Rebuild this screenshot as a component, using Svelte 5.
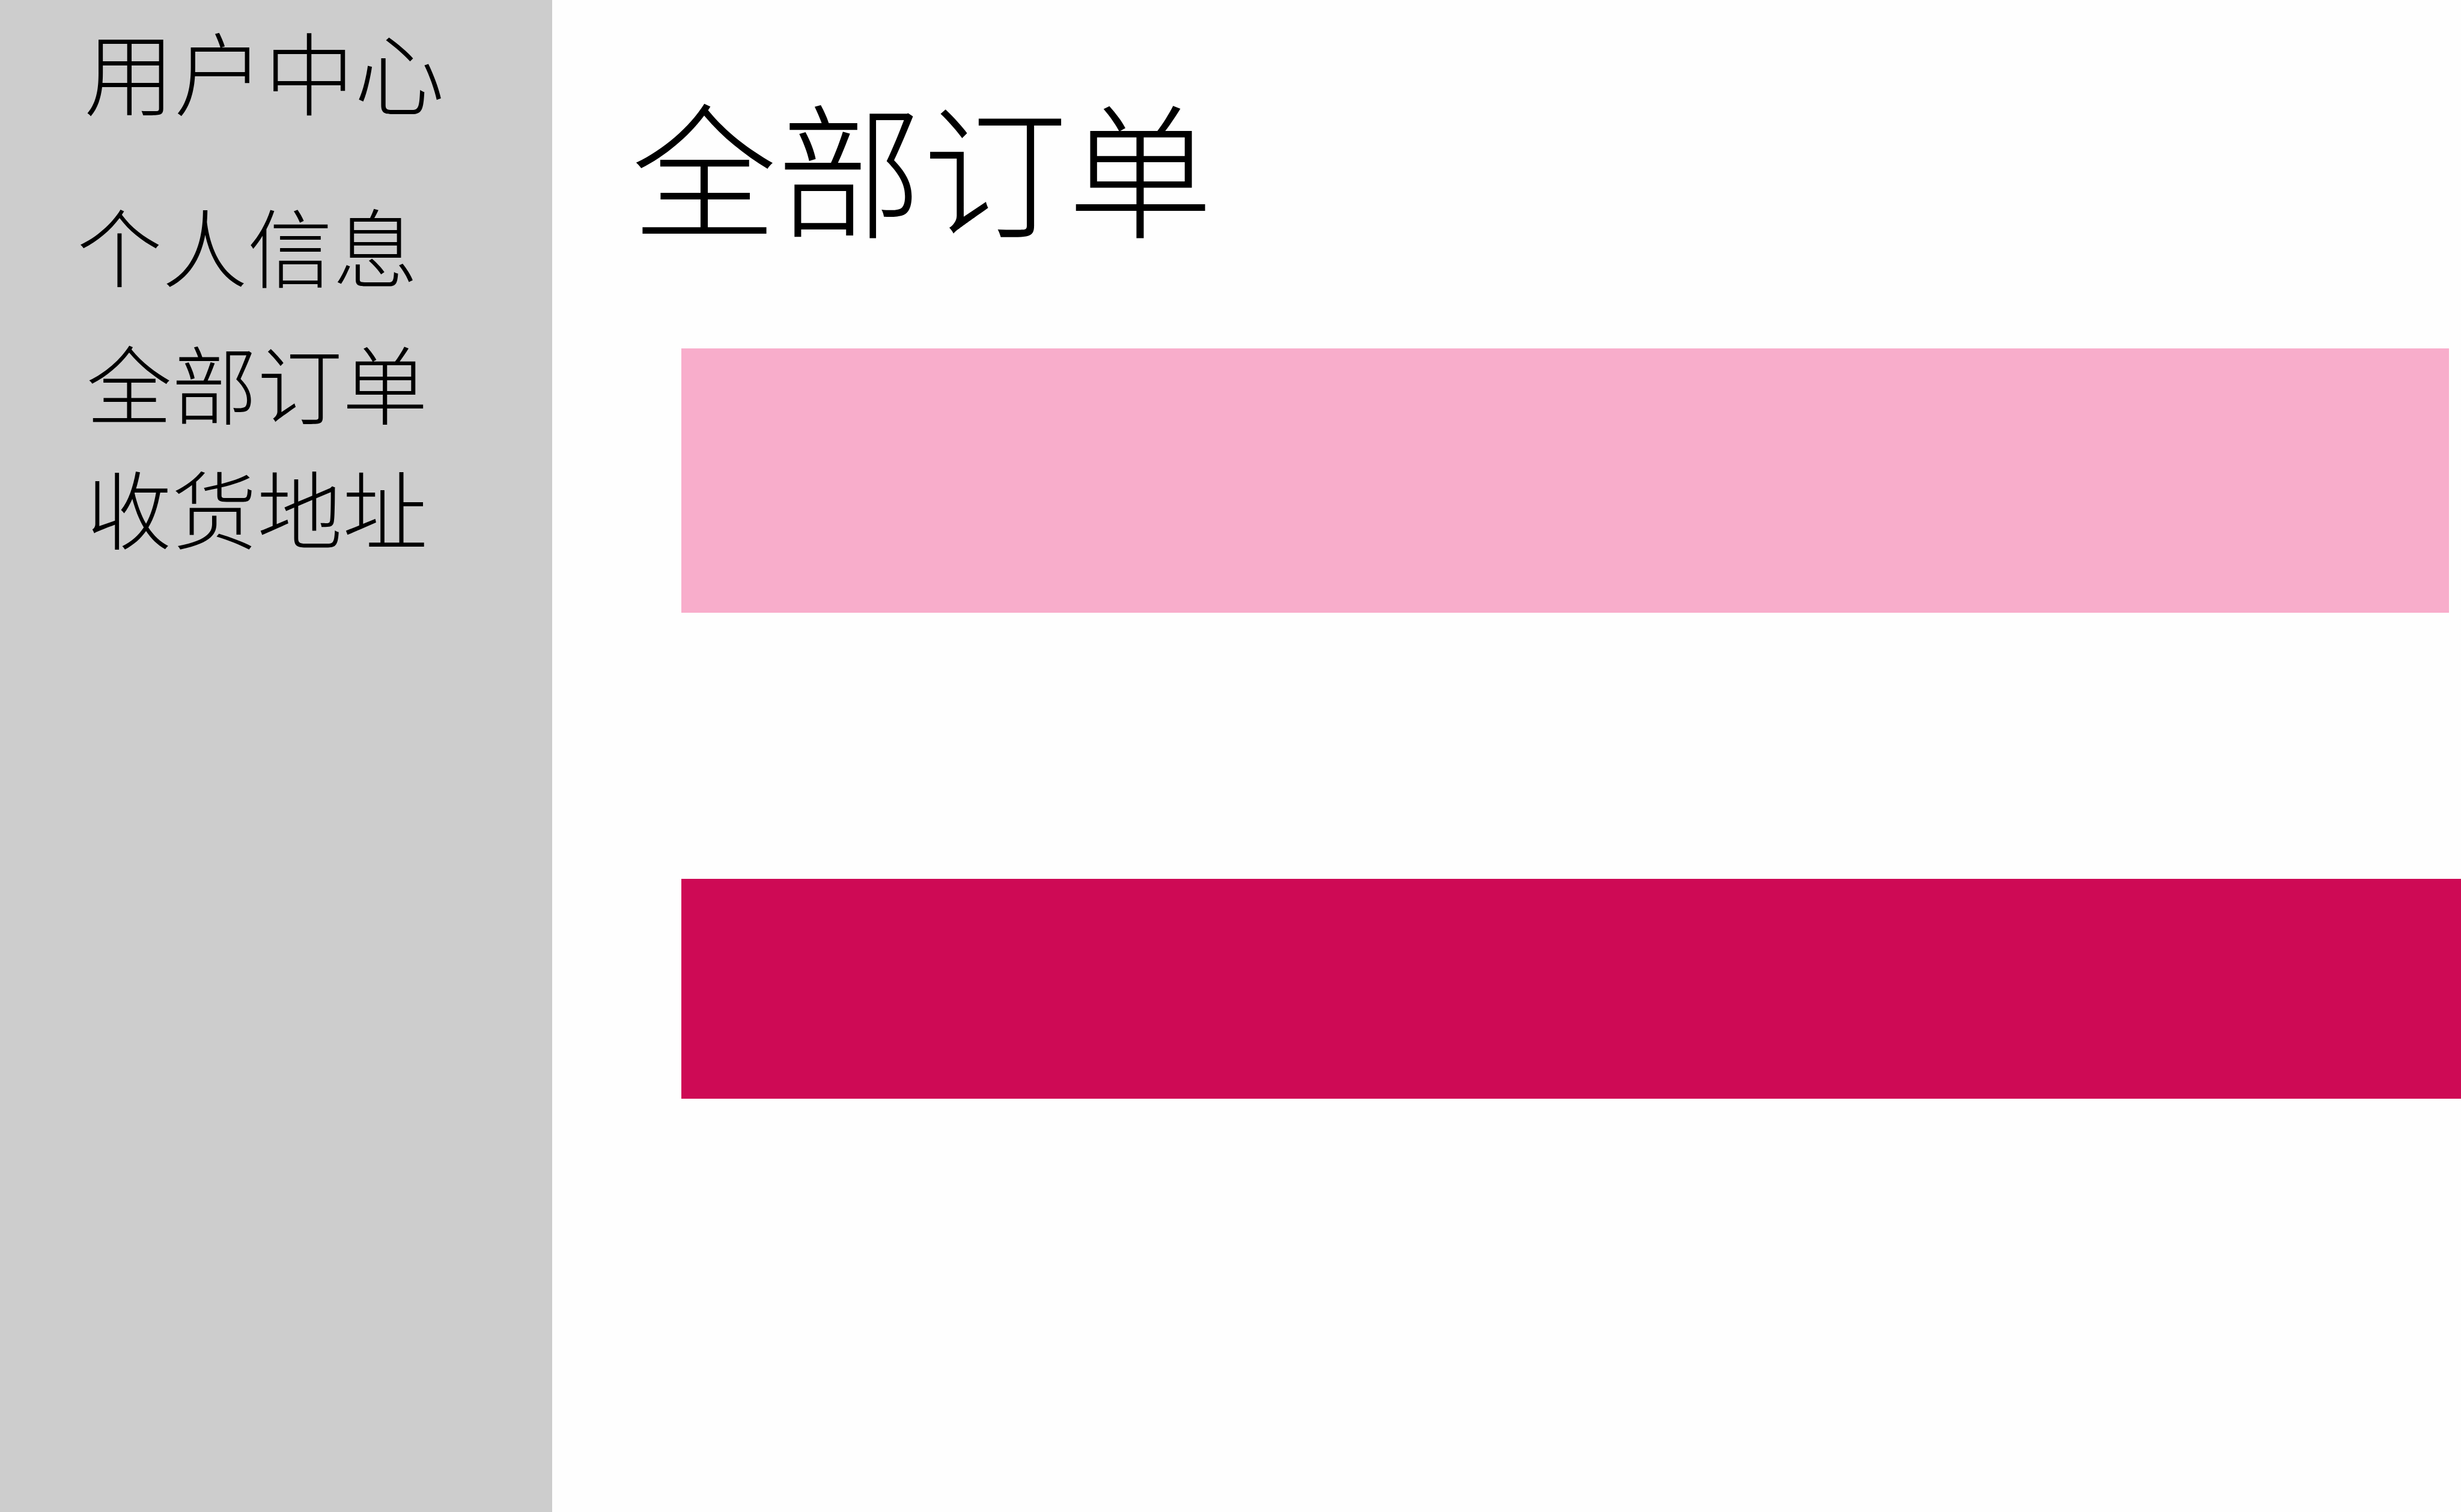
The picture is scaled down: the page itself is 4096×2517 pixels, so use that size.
<script>
  const profileLinks = [{ label: '个人信息', href: '#profile' }];
  const shopLinks = [
    { label: '全部订单', href: '#orders' },
    { label: '收货地址', href: '#addresses' }
  ];
</script>

<div class="page">
  <aside class="sidebar">
    <h2 class="brand">用户中心</h2>
    <nav class="menu" aria-label="用户中心">
      <ul class="group profile">
        {#each profileLinks as link}
          <li><a href={link.href}>{link.label}</a></li>
        {/each}
      </ul>
      <ul class="group shop">
        {#each shopLinks as link}
          <li><a href={link.href}>{link.label}</a></li>
        {/each}
      </ul>
    </nav>
  </aside>

  <main class="content">
    <h1 class="title" id="orders">全部订单</h1>
    <section class="orders" aria-labelledby="orders">
      <div class="band light"></div>
      <div class="band strong"></div>
    </section>
  </main>
</div>

<style>
  :global(body) {
    background: #fefefe;
  }

  .page {
    display: flex;
    min-height: 100vh;
    color: #000;
    font-family: 'Noto Sans CJK SC', sans-serif;
    font-weight: 300;
  }

  .sidebar {
    box-sizing: border-box;
    flex: 0 0 919px;
    padding-top: 28px;
    background: #cdcdcd;
  }

  .brand,
  .title {
    margin: 0;
    font-weight: 300;
    white-space: nowrap;
  }

  .brand {
    padding-left: 140px;
    font-size: 150px;
    line-height: 176px;
  }

  .menu {
    display: flex;
    flex-direction: column;
    gap: 60px;
    padding-top: 118px;
  }

  .group {
    display: flex;
    flex-direction: column;
    gap: 40px;
    margin: 0;
    padding: 0;
    list-style: none;
  }

  .profile {
    padding-left: 128px;
  }

  .shop {
    padding-left: 144px;
  }

  .group a {
    display: block;
    color: inherit;
    font-size: 142px;
    line-height: 168px;
    text-decoration: none;
    white-space: nowrap;
  }

  .content {
    flex: 1;
    min-width: 0;
    padding-top: 133px;
  }

  .title {
    padding-left: 132px;
    font-size: 242px;
    line-height: 280px;
  }

  .orders {
    display: flex;
    flex-direction: column;
    gap: 443px;
    padding: 167px 0 0 215px;
  }

  .light {
    height: 440px;
    margin-right: 20px;
    background: #f8adcb;
  }

  .strong {
    height: 366px;
    background: #ce0a55;
  }
</style>
